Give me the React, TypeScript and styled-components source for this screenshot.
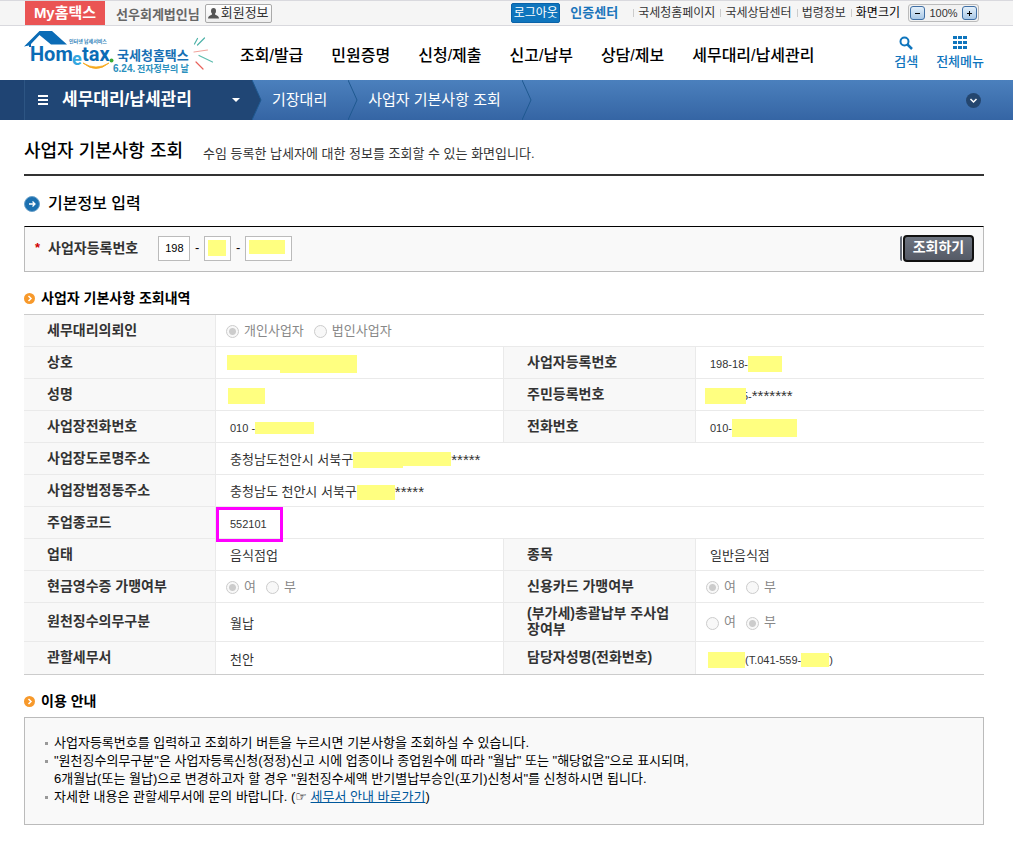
import React from 'react';
import styled, { createGlobalStyle } from 'styled-components';

const GlobalStyle = createGlobalStyle`
  * { box-sizing: border-box; }
  body {
    margin: 0;
    background: #fff;
    color: #333;
    font: 13px/18px "Liberation Sans", "Noto Sans CJK KR", sans-serif;
  }
  button, input { font: inherit; color: inherit; }
  h1, h2, p, ul { margin: 0; padding: 0; }
  a { color: inherit; text-decoration: none; }
`;

const GUTTER = '0 29px 0 24px';

/* ---------- utility bar ---------- */

const TopBar = styled.div`
  display: flex;
  align-items: center;
  height: 26px;
  padding: 0 34px 0 25px;
  background: #f5f5f5;
  border-top: 1px solid #d9d9de;
  border-bottom: 1px solid #d9d9de;
  font-size: 12px;
  white-space: nowrap;
`;

const MyTab = styled.a`
  width: 80px;
  height: 24px;
  background: #ea5454;
  color: #fff;
  font-size: 15px;
  font-weight: 700;
  line-height: 24px;
  text-align: center;
`;

const UserName = styled.strong`
  margin: 4px 5px 0 11px;
  color: #666;
  font-size: 13px;
`;

const InfoButton = styled.button`
  display: flex;
  align-items: center;
  gap: 2px;
  height: 19px;
  padding: 0 2px;
  border: 1px solid #aaa;
  border-radius: 2px;
  background: linear-gradient(#fff, #eee);
  color: #333;
  font-size: 13px;
  line-height: 16px;
`;

const LogoutButton = styled.button`
  width: 49px;
  height: 20px;
  margin-left: auto;
  padding: 0;
  border: 1px solid #0a62a8;
  border-radius: 2px;
  background: #0f75bd;
  color: #fff;
  line-height: 18px;
`;

const CertLink = styled.a`
  margin: 0 15px 0 10px;
  color: #1b75bb;
  font-size: 13px;
  font-weight: 700;
`;

const UtilLink = styled.a<{ $strong?: boolean }>`
  display: flex;
  align-items: center;
  gap: 4px;
  margin-right: 5px;
  color: ${(p) => (p.$strong ? '#000' : '#333')};
  &::before {
    content: '';
    width: 1px;
    height: 8px;
    background: #ccc;
  }
`;

const ZoomBox = styled.div`
  display: flex;
  align-items: center;
  justify-content: space-between;
  width: 71px;
  height: 18px;
  margin-left: 3px;
  padding: 0 1px;
  border: 1px solid #bbb;
  border-radius: 3px;
  background: #f2f2f2;
  font-size: 11px;
`;

const ZoomButton = styled.button`
  display: grid;
  place-items: center;
  width: 15px;
  height: 14px;
  padding: 0;
  border: 1px solid #3f6fa5;
  border-radius: 3px;
  background: linear-gradient(#e4f0fa, #a9c8e6);
`;

/* ---------- header ---------- */

const Header = styled.header`
  display: flex;
  align-items: center;
  height: 54px;
  padding: ${GUTTER};
  white-space: nowrap;
`;

const MainNav = styled.nav`
  display: flex;
  gap: 28px;
  margin: 6px auto 0 24px;
  color: #000;
  font-size: 16px;
  font-weight: 500;
  line-height: 24px;
`;

const Tools = styled.div`
  display: flex;
  gap: 18px;
`;

const Tool = styled.button`
  display: flex;
  flex-direction: column;
  align-items: center;
  gap: 3px;
  padding: 0;
  border: 0;
  background: none;
  color: #0f75bd;
  font-size: 13px;
  font-weight: 500;
  line-height: 18px;
`;

/* ---------- breadcrumb ---------- */

const Crumbs = styled.nav`
  display: flex;
  height: 40px;
  padding-right: 32px;
  background: linear-gradient(#4b80bd, #3565a4);
  color: #fff;
  font-size: 15px;
  line-height: 40px;
  white-space: nowrap;
`;

const CrumbRoot = styled.button`
  display: flex;
  align-items: center;
  gap: 14px;
  width: 252px;
  padding: 0 12px 0 14px;
  border: 0;
  border-left: 24px solid #1f4473;
  background: #204675;
  box-shadow: inset 1px 0 #2d5583;
  font-size: 17px;
  font-weight: 700;
  line-height: 40px;
  & > span { margin-right: auto; }
`;

const Crumb = styled.a`
  padding: 0 21px 0 10px;
`;

const ExpandButton = styled.button`
  align-self: center;
  width: 15px;
  height: 15px;
  margin-left: auto;
  padding: 0;
  border: 0;
  border-radius: 50%;
  background: #24466f;
  line-height: 0;
`;

/* ---------- page ---------- */

const Main = styled.main`
  padding: ${GUTTER};
`;

const TitleRow = styled.div`
  display: flex;
  align-items: center;
  gap: 20px;
  height: 56px;
  padding-top: 8px;
  border-bottom: 2px solid #333;
`;

const Title = styled.h1`
  color: #000;
  font-size: 18px;
  font-weight: 500;
  line-height: 24px;
`;

const Lead = styled.p`
  padding-top: 5px;
`;

const Heading = styled.h2<{ $large?: boolean }>`
  display: flex;
  align-items: center;
  gap: ${(p) => (p.$large ? 8 : 6)}px;
  height: ${(p) => (p.$large ? 50 : 42)}px;
  padding-top: ${(p) => (p.$large ? 5 : 10)}px;
  color: #000;
  font-size: ${(p) => (p.$large ? 16 : 14)}px;
  font-weight: ${(p) => (p.$large ? 500 : 700)};
  line-height: 20px;
`;

const SearchPanel = styled.form`
  display: flex;
  align-items: center;
  height: 46px;
  padding: 0 9px 2px 10px;
  border: 1px solid #bbb;
  border-top-color: #000;
  background: #f9f9f9;
  color: #000;
`;

const Required = styled.span`
  width: 13px;
  color: #d00000;
  font-weight: 700;
`;

const FieldLabel = styled.label`
  margin-right: 20px;
  color: #333;
  font-size: 14px;
  font-weight: 700;
`;

const NumberInput = styled.input<{ $w: number; $mask?: string }>`
  width: ${(p) => p.$w}px;
  height: 25px;
  padding: 0 4px 0 6px;
  border: 1px solid #bbb;
  font-size: 11px;
  background: #fff ${(p) => (p.$mask ? `linear-gradient(#ffff80, #ffff80) 3px 3px / ${p.$mask} no-repeat` : '')};
`;

const Dash = styled.span`
  width: 14px;
  text-align: center;
`;

const SearchButton = styled.button`
  width: 71px;
  height: 27px;
  padding: 0 0 3px;
  border: 2px solid #111;
  border-radius: 4px;
  background: linear-gradient(#6d7480, #555a66);
  color: #fff;
  font-size: 14px;
  font-weight: 700;
  line-height: 18px;
`;

const ButtonEdge = styled.span`
  width: 2px;
  height: 25px;
  margin: 0 1px 0 auto;
  border-radius: 2px 0 0 2px;
  background: #666c78;
`;

const Table = styled.table`
  width: 100%;
  table-layout: fixed;
  border-collapse: separate;
  border-spacing: 0;
  border-top: 1px solid #ccc;
  border-bottom: 1px solid #ccc;
`;

const Th = styled.th`
  height: 32px;
  padding: 2px 14px 4px 23px;
  border-right: 1px solid #eaeaea;
  border-bottom: 1px solid #eaeaea;
  background: #f8f8f8;
  color: #333;
  font-size: 14px;
  font-weight: 700;
  line-height: 16px;
  text-align: left;
  tr:last-child > & { border-bottom: 0; }
`;

const Td = styled.td`
  position: relative;
  padding: 0;
  border-bottom: 1px solid #eaeaea;
  &:not(:last-child) { border-right: 1px solid #eaeaea; }
  tr:last-child > & { border-bottom: 0; }
`;

const Value = styled.div<{ $start?: number }>`
  display: flex;
  align-items: center;
  padding: 3px 0 0 ${(p) => p.$start ?? 14}px;
  white-space: pre;
`;

const Digits = styled.span`
  font-size: 11px;
`;

const Stars = styled.span`
  font-size: 15px;
`;

const Mask = styled.span<{ $w: number; $h: number; $over?: boolean }>`
  position: relative;
  width: ${(p) => p.$w}px;
  height: ${(p) => p.$h}px;
  margin-right: ${(p) => (p.$over ? -4 : 0)}px;
  background: #ffff80;
  z-index: 1;
`;

const MaskPair = styled.span`
  display: flex;
  align-items: flex-start;
`;

const Highlight = styled.span`
  position: absolute;
  top: 0;
  left: 0;
  width: 67px;
  height: 35px;
  border: 3px solid #ff00ff;
`;

const Options = styled.div`
  display: flex;
  align-items: center;
  gap: 10px;
  padding-left: 10px;
`;

const Option = styled.label`
  display: flex;
  align-items: center;
  gap: 5px;
  color: #888;
`;

const Radio = styled.input`
  appearance: none;
  width: 13px;
  height: 13px;
  margin: 2px 0 0;
  border: 1px solid #ccc;
  border-radius: 50%;
  background: #f8f8f8;
  &:checked { background: radial-gradient(circle, #ccc 0 3px, #f8f8f8 4px); }
`;

const Guide = styled.ul`
  padding: 16px 20px 18px;
  border: 1px solid #bbb;
  background: #f9f9f9;
  color: #000;
  list-style: none;
`;

const GuideItem = styled.li`
  display: flex;
  gap: 6px;
  &::before {
    content: '';
    flex: none;
    width: 3px;
    height: 3px;
    margin-top: 8px;
    background: #999;
  }
  a { color: #00589b; text-decoration: underline; }
`;

const Hand = styled.span`
  font-family: "DejaVu Sans", sans-serif;
`;

/* ---------- drawings ---------- */

const Logo = () => (
  <svg width="192" height="50" viewBox="24 30 192 50" role="img" aria-label="Hometax 국세청홈택스">
    <path d="M24 48.500 39.500 33H52l15 13.500H51L39.500 37 31 46v3h-2v-1.500z" fill="#0b6cb6" />
    <g fontFamily="Roboto" fontWeight="700" fill="#0b6cb6">
      <text x="30" y="63" fontSize="20">Hom</text>
      <text x="72" y="67" fontSize="18" fill="#35a8e0">e</text>
      <text x="82" y="63" fontSize="20">tax</text>
    </g>
    <circle cx="111.500" cy="62.500" r="2" fill="#3aaa35" />
    <path d="M83 65q13 11 26 0-13 8-26 0z" fill="#f6a81c" stroke="#f6a81c" strokeWidth=".8" />
    <g fontFamily="Noto Sans CJK KR" fontWeight="700">
      <text x="69" y="45" fontSize="5" fill="#2f7fb8">인터넷 납세서비스</text>
      <text x="117" y="62" fontSize="13" fill="#176fb4">국세청홈택스</text>
      <text x="113" y="74" fontSize="10" fill="#2a8fbd" fontFamily="Liberation Sans">6.24.</text>
      <text x="137" y="74" fontSize="9" fill="#2a8fbd">전자정부의 날</text>
    </g>
    <g fill="none" strokeWidth="1.200" strokeLinecap="round">
      <path d="M194.500 46l3-5.500M197.500 47l7-7" stroke="#4fb3a9" />
      <path d="M194 54l13.500-2" stroke="#f0a49c" />
      <path d="M199 57.500l13.500 6.500" stroke="#5cbcae" />
      <path d="M196 64l7 7" stroke="#e8605a" />
    </g>
  </svg>
);

const PersonIcon = () => (
  <svg width="11" height="11" viewBox="0 0 11 11" fill="#555">
    <ellipse cx="5.500" cy="3" rx="2.500" ry="3" />
    <path d="M0 10.500C0 8 2 7.500 4 6.500V5h3v1.500c2 1 4 1.500 4 4z" />
  </svg>
);

const SearchIcon = () => (
  <svg width="14" height="14" viewBox="0 0 14 14" fill="none" stroke="#0f75bd">
    <circle cx="5.500" cy="5.500" r="4" strokeWidth="2" />
    <path d="M8.500 8.500 13 13" strokeWidth="2.500" />
  </svg>
);

const GridIcon = () => (
  <svg width="14" height="14" viewBox="0 0 14 14" fill="#0f75bd">
    {[0, 5, 10].map((y) => [0, 5, 10].map((x) => <rect key={`${x}-${y}`} x={x} y={y} width="4" height="3" />))}
  </svg>
);

const MenuIcon = () => (
  <svg width="10" height="10" viewBox="0 0 10 10" fill="#fff">
    <path d="M0 0h10v2H0zM0 4h10v2H0zM0 8h10v2H0z" />
  </svg>
);

const CaretIcon = () => (
  <svg width="8" height="4" viewBox="0 0 8 4" fill="#fff"><path d="M0 0h8L4 4z" /></svg>
);

const CrumbArrow = ({ solid }: { solid?: boolean }) => (
  <svg width="10" height="40" viewBox="0 0 10 40">
    {solid && <path d="M0 0 9 20 0 40z" fill="#204675" />}
    <path d="M0 0 9 20 0 40" fill="none" stroke="#1f5990" strokeWidth="1" />
  </svg>
);

const BlueArrow = () => (
  <svg width="16" height="16" viewBox="0 0 16 16">
    <circle cx="8" cy="8" r="7.500" fill="#1b70b0" stroke="#6ba1c9" />
    <path d="M5 8h5.500M8.500 5.500 11 8l-2.500 2.500" fill="none" stroke="#fff" strokeWidth="1.300" />
  </svg>
);

const OrangeArrow = () => (
  <svg width="11" height="11" viewBox="0 0 11 11">
    <circle cx="5.500" cy="5.500" r="5.500" fill="#f7992b" />
    <path d="M4.500 3 7 5.500 4.500 8" fill="none" stroke="#fff" strokeWidth="1.500" />
  </svg>
);

/* ---------- composition ---------- */

const YesNo = ({ name, value }: { name: string; value: 'yes' | 'no' }) => (
  <Options role="radiogroup" aria-label={name}>
    <Option><Radio type="radio" name={name} defaultChecked={value === 'yes'} disabled />여</Option>
    <Option><Radio type="radio" name={name} defaultChecked={value === 'no'} disabled />부</Option>
  </Options>
);

const menu = ['조회/발급', '민원증명', '신청/제출', '신고/납부', '상담/제보', '세무대리/납세관리'];

export default function App() {
  return (
    <>
      <GlobalStyle />
      <TopBar>
        <MyTab href="#">My홈택스</MyTab>
        <UserName>선우회계법인님</UserName>
        <InfoButton type="button"><PersonIcon />회원정보</InfoButton>
        <LogoutButton type="button">로그아웃</LogoutButton>
        <CertLink href="#">인증센터</CertLink>
        <UtilLink href="#">국세청홈페이지</UtilLink>
        <UtilLink href="#">국세상담센터</UtilLink>
        <UtilLink href="#">법령정보</UtilLink>
        <UtilLink href="#" $strong>화면크기</UtilLink>
        <ZoomBox>
          <ZoomButton type="button" aria-label="축소">
            <svg width="5" height="5" viewBox="0 0 5 5"><path d="M0 2.500h5" stroke="#000" /></svg>
          </ZoomButton>
          100%
          <ZoomButton type="button" aria-label="확대">
            <svg width="5" height="5" viewBox="0 0 5 5"><path d="M0 2.500h5M2.500 0v5" stroke="#000" /></svg>
          </ZoomButton>
        </ZoomBox>
      </TopBar>

      <Header>
        <Logo />
        <MainNav>
          {menu.map((m) => <a key={m} href="#">{m}</a>)}
        </MainNav>
        <Tools>
          <Tool type="button"><SearchIcon />검색</Tool>
          <Tool type="button"><GridIcon />전체메뉴</Tool>
        </Tools>
      </Header>

      <Crumbs>
        <CrumbRoot type="button"><MenuIcon /><span>세무대리/납세관리</span><CaretIcon /></CrumbRoot>
        <CrumbArrow solid />
        <Crumb href="#">기장대리</Crumb>
        <CrumbArrow />
        <Crumb href="#">사업자 기본사항 조회</Crumb>
        <CrumbArrow />
        <ExpandButton type="button" aria-label="펼치기">
          <svg width="15" height="15" viewBox="0 0 15 15"><path d="M4.500 6 7.500 9l3-3" fill="none" stroke="#fff" strokeWidth="1.500" /></svg>
        </ExpandButton>
      </Crumbs>

      <Main>
        <TitleRow>
          <Title>사업자 기본사항 조회</Title>
          <Lead>수임 등록한 납세자에 대한 정보를 조회할 수 있는 화면입니다.</Lead>
        </TitleRow>

        <Heading $large><BlueArrow />기본정보 입력</Heading>
        <SearchPanel onSubmit={(e) => e.preventDefault()}>
          <Required>*</Required>
          <FieldLabel htmlFor="biz1">사업자등록번호</FieldLabel>
          <NumberInput id="biz1" $w={32} defaultValue="198" />
          <Dash>-</Dash>
          <NumberInput aria-label="사업자등록번호 가운데 자리" $w={27} $mask="18px 16px" />
          <Dash>-</Dash>
          <NumberInput aria-label="사업자등록번호 끝자리" $w={47} $mask="36px 14px" />
          <ButtonEdge />
          <SearchButton type="submit">조회하기</SearchButton>
        </SearchPanel>

        <Heading><OrangeArrow />사업자 기본사항 조회내역</Heading>
        <Table>
          <colgroup>
            <col width="20%" /><col width="30%" /><col width="20%" /><col width="30%" />
          </colgroup>
          <tbody>
            <tr>
              <Th scope="row">세무대리의뢰인</Th>
              <Td colSpan={3}>
                <Options role="radiogroup" aria-label="세무대리의뢰인">
                  <Option><Radio type="radio" name="client" defaultChecked disabled />개인사업자</Option>
                  <Option><Radio type="radio" name="client" disabled />법인사업자</Option>
                </Options>
              </Td>
            </tr>
            <tr>
              <Th scope="row">상호</Th>
              <Td><Value $start={11}><MaskPair><Mask $w={53} $h={15} /><Mask $w={77} $h={18} /></MaskPair></Value></Td>
              <Th scope="row">사업자등록번호</Th>
              <Td><Value><Digits>198-18-</Digits><Mask $w={34} $h={16} /></Value></Td>
            </tr>
            <tr>
              <Th scope="row">성명</Th>
              <Td><Value $start={12}><Mask $w={37} $h={16} /></Value></Td>
              <Th scope="row">주민등록번호</Th>
              <Td><Value $start={9}><Mask $w={41} $h={16} $over /><Digits>5-</Digits><Stars>*******</Stars></Value></Td>
            </tr>
            <tr>
              <Th scope="row">사업장전화번호</Th>
              <Td><Value><Digits>010 -</Digits><Mask $w={59} $h={12} /></Value></Td>
              <Th scope="row">전화번호</Th>
              <Td><Value><Digits>010-</Digits><Mask $w={65} $h={18} /></Value></Td>
            </tr>
            <tr>
              <Th scope="row">사업장도로명주소</Th>
              <Td colSpan={3}><Value>충청남도천안시 서북구<MaskPair><Mask $w={50} $h={16} /><Mask $w={48} $h={14} /></MaskPair><Stars>*****</Stars></Value></Td>
            </tr>
            <tr>
              <Th scope="row">사업장법정동주소</Th>
              <Td colSpan={3}><Value>충청남도 천안시 서북구<Mask $w={38} $h={15} /><Stars>*****</Stars></Value></Td>
            </tr>
            <tr>
              <Th scope="row">주업종코드</Th>
              <Td colSpan={3}><Value><Digits>552101</Digits></Value><Highlight /></Td>
            </tr>
            <tr>
              <Th scope="row">업태</Th>
              <Td><Value>음식점업</Value></Td>
              <Th scope="row">종목</Th>
              <Td><Value>일반음식점</Value></Td>
            </tr>
            <tr>
              <Th scope="row">현금영수증 가맹여부</Th>
              <Td><YesNo name="현금영수증 가맹여부" value="yes" /></Td>
              <Th scope="row">신용카드 가맹여부</Th>
              <Td><YesNo name="신용카드 가맹여부" value="yes" /></Td>
            </tr>
            <tr>
              <Th scope="row">원천징수의무구분</Th>
              <Td><Value>월납</Value></Td>
              <Th scope="row">(부가세)총괄납부 주사업<br />장여부</Th>
              <Td><YesNo name="총괄납부 주사업장여부" value="no" /></Td>
            </tr>
            <tr>
              <Th scope="row">관할세무서</Th>
              <Td><Value>천안</Value></Td>
              <Th scope="row">담당자성명(전화번호)</Th>
              <Td><Value $start={12}><Mask $w={37} $h={16} /><Digits>(T.041-559-</Digits><Mask $w={28} $h={14} /><Digits>)</Digits></Value></Td>
            </tr>
          </tbody>
        </Table>

        <Heading><OrangeArrow />이용 안내</Heading>
        <Guide>
          <GuideItem><p>사업자등록번호를 입력하고 조회하기 버튼을 누르시면 기본사항을 조회하실 수 있습니다.</p></GuideItem>
          <GuideItem>
            <p>
              "원천징수의무구분"은 사업자등록신청(정정)신고 시에 업종이나 종업원수에 따라 "월납" 또는 "해당없음"으로 표시되며,<br />
              6개월납(또는 월납)으로 변경하고자 할 경우 "원천징수세액 반기별납부승인(포기)신청서"를 신청하시면 됩니다.
            </p>
          </GuideItem>
          <GuideItem><p>자세한 내용은 관할세무서에 문의 바랍니다. (<Hand>☞</Hand> <a href="#">세무서 안내 바로가기</a>)</p></GuideItem>
        </Guide>
      </Main>
    </>
  );
}
